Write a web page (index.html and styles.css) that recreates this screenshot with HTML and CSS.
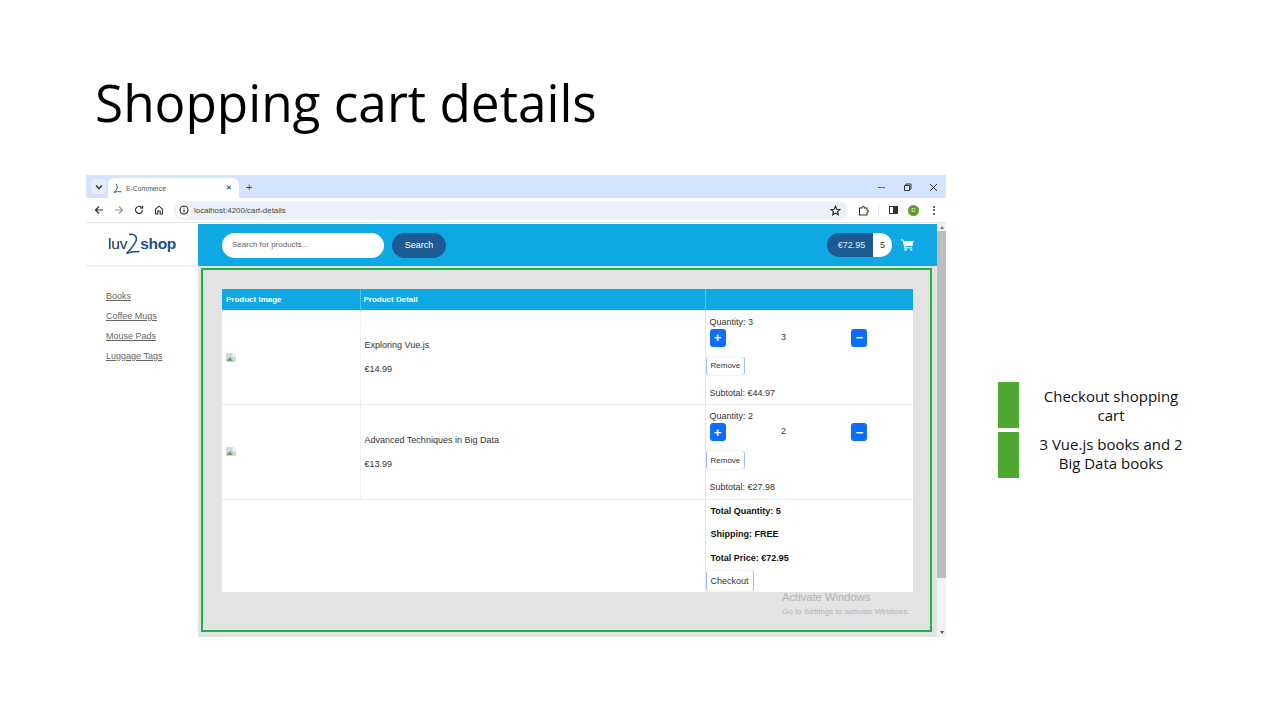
FILE: index.html
```html
<!DOCTYPE html>
<html lang="en">
<head>
    <meta charset="UTF-8">
    <title>Shopping cart details</title>
    <link rel="stylesheet" href="styles.css">
</head>
<body>
    <div class="slide">
        <h1 class="slide-title">Shopping cart details</h1>
        <div class="slide-body">
            <div class="browser">
                <div class="tabstrip">
                    <span class="tab-menu">
                        <svg width="8" height="8" viewBox="0 0 8 8"><path d="M1 2.5 4 5.5 7 2.5" fill="none" stroke="#333" stroke-width="1.4"/></svg>
                    </span>
                    <div class="tab">
                        <svg width="9" height="11" viewBox="0 0 9 11"><path d="M3 .8C4.5 2.5 4.5 5 3.5 6.5L1 9.5C3 8.5 6 8.5 8.5 8.8" fill="none" stroke="#1a5a96" stroke-width="1"/></svg>
                        <span class="tab-title">E-Commerce</span>
                        <span class="tab-close">✕</span>
                    </div>
                    <span class="tab-new">+</span>
                    <div class="window-controls">
                        <svg width="9" height="9" viewBox="0 0 9 9"><path d="M1 4.5H8" stroke="#666" stroke-width="1"/></svg>
                        <svg width="9" height="9" viewBox="0 0 9 9"><path d="M1.5 2.5H6.5V7.5H1.5ZM3 2.5V1H8V6H6.5" fill="none" stroke="#333" stroke-width="1"/></svg>
                        <svg width="9" height="9" viewBox="0 0 9 9"><path d="M1 1 8 8M8 1 1 8" stroke="#333" stroke-width="1"/></svg>
                    </div>
                </div>
                <div class="toolbar">
                    <svg class="nav-icon" width="10" height="10" viewBox="0 0 10 10"><path d="M9 5H1.5M5 1.5 1.5 5 5 8.5" fill="none" stroke="#333" stroke-width="1.2"/></svg>
                    <svg class="nav-icon" width="10" height="10" viewBox="0 0 10 10"><path d="M1 5H8.5M5 1.5 8.5 5 5 8.5" fill="none" stroke="#999" stroke-width="1.2"/></svg>
                    <svg class="nav-icon" width="10" height="10" viewBox="0 0 10 10"><path d="M8.5 5A3.5 3.5 0 1 1 7.4 2.4M8.6 0.8V3.2H6.2" fill="none" stroke="#333" stroke-width="1.2"/></svg>
                    <svg class="nav-icon" width="10" height="10" viewBox="0 0 10 10"><path d="M1.5 9V4.2L5 1.2 8.5 4.2V9H6.2V6H3.8V9Z" fill="none" stroke="#333" stroke-width="1.1"/></svg>
                    <div class="omnibox">
                        <span class="site-info">
                            <svg width="10" height="10" viewBox="0 0 10 10"><circle cx="5" cy="5" r="4" fill="none" stroke="#222" stroke-width="1.1"/><path d="M5 4.4V7.4M5 2.6V3.6" stroke="#222" stroke-width="1.1"/></svg>
                        </span>
                        <span class="url">localhost:4200/cart-details</span>
                        <svg class="star" width="11" height="11" viewBox="0 0 11 11"><path d="M5.5 1.2 6.8 4.2 10 4.5 7.6 6.6 8.3 9.8 5.5 8.1 2.7 9.8 3.4 6.6 1 4.5 4.2 4.2Z" fill="none" stroke="#222" stroke-width="1.1"/></svg>
                    </div>
                    <svg class="ext" width="11" height="11" viewBox="0 0 11 11"><path d="M1.5 3H4C4 1 6.5 1 6.5 3H9V5C10.8 5 10.8 7.5 9 7.5V10H1.5Z" fill="none" stroke="#333" stroke-width="1.1"/></svg>
                    <span class="divider"></span>
                    <span class="sidepanel"><span></span></span>
                    <span class="avatar">D</span>
                    <span class="kebab"><i></i><i></i><i></i></span>
                </div>
                <div class="page">
                    <div class="page-main">
                        <aside class="sidebar">
                            <div class="logo">
                                <span class="logo-luv">luv</span>
                                <svg class="logo-two" width="16" height="25" viewBox="0 0 16 25"><path d="M4 1.5C10 .5 13 4 10.5 9 8.5 13 5 17 1.5 20.5 6 18.5 10 18.5 14.5 18.5" fill="none" stroke="#1a4f8c" stroke-width="1.6"/></svg>
                                <span class="logo-shop">shop</span>
                            </div>
                            <nav class="menu">
                                <a href="#">Books</a>
                                <a href="#">Coffee Mugs</a>
                                <a href="#">Mouse Pads</a>
                                <a href="#">Luggage Tags</a>
                            </nav>
                        </aside>
                        <div class="content">
                            <header class="topbar">
                                <input class="search-input" placeholder="Search for products...">
                                <button class="search-btn">Search</button>
                                <div class="cart-status">
                                    <span class="cart-total">€72.95</span>
                                    <span class="cart-count">5</span>
                                </div>
                                <svg class="cart-icon" width="13" height="12" viewBox="0 0 13 12"><path d="M0 .5H2.3L2.8 2H12.6L11.4 7H4L4.3 8.2H11.2V9.2H3.4L1.6 1.5H0Z" fill="#fff"/><circle cx="4.6" cy="10.6" r="1.2" fill="#fff"/><circle cx="10.2" cy="10.6" r="1.2" fill="#fff"/></svg>
                            </header>
                            <main class="cart-area">
                                <table class="cart-table">
                                    <thead>
                                        <tr>
                                            <th class="col-image">Product Image</th>
                                            <th class="col-detail">Product Detail</th>
                                            <th class="col-actions"></th>
                                        </tr>
                                    </thead>
                                    <tbody>
                                        <tr class="item-row">
                                            <td><svg class="broken-img" width="10" height="9" viewBox="0 0 10 9"><path d="M0 0H7L10 3V9H0Z" fill="#cfd8e6"/><path d="M1 7 4 4 7 8H1Z" fill="#6aa84f"/><path d="M6 0 10 4 7 4Z" fill="#fff"/></svg></td>
                                            <td>
                                                <p class="item-name">Exploring Vue.js</p>
                                                <p class="item-price">€14.99</p>
                                            </td>
                                            <td class="actions">
                                                <div class="qty-label">Quantity: 3</div>
                                                <div class="qty-row">
                                                    <button class="qty-btn">+</button>
                                                    <span class="qty-value">3</span>
                                                    <button class="qty-btn">−</button>
                                                </div>
                                                <button class="outline-btn remove-btn">Remove</button>
                                                <div class="subtotal">Subtotal: €44.97</div>
                                            </td>
                                        </tr>
                                        <tr class="item-row">
                                            <td><svg class="broken-img" width="10" height="9" viewBox="0 0 10 9"><path d="M0 0H7L10 3V9H0Z" fill="#cfd8e6"/><path d="M1 7 4 4 7 8H1Z" fill="#6aa84f"/><path d="M6 0 10 4 7 4Z" fill="#fff"/></svg></td>
                                            <td>
                                                <p class="item-name">Advanced Techniques in Big Data</p>
                                                <p class="item-price">€13.99</p>
                                            </td>
                                            <td class="actions">
                                                <div class="qty-label">Quantity: 2</div>
                                                <div class="qty-row">
                                                    <button class="qty-btn">+</button>
                                                    <span class="qty-value">2</span>
                                                    <button class="qty-btn">−</button>
                                                </div>
                                                <button class="outline-btn remove-btn">Remove</button>
                                                <div class="subtotal">Subtotal: €27.98</div>
                                            </td>
                                        </tr>
                                        <tr class="total-row">
                                            <td colspan="2"></td>
                                            <td class="totals">
                                                <p>Total Quantity: 5</p>
                                                <p>Shipping: FREE</p>
                                                <p>Total Price: €72.95</p>
                                                <button class="outline-btn checkout-btn">Checkout</button>
                                            </td>
                                        </tr>
                                    </tbody>
                                </table>
                                <div class="highlight"></div>
                                <div class="watermark">
                                    <div class="wm-title">Activate Windows</div>
                                    <div class="wm-sub">Go to Settings to activate Windows.</div>
                                </div>
                            </main>
                        </div>
                    </div>
                    <div class="scrollbar">
                        <span class="arrow-up"></span>
                        <span class="thumb"></span>
                        <span class="arrow-down"></span>
                    </div>
                </div>
            </div>
            <ul class="notes">
                <li><span class="note-mark"></span><span class="note-text">Checkout shopping cart</span></li>
                <li><span class="note-mark"></span><span class="note-text">3 Vue.js books and 2 Big Data books</span></li>
            </ul>
        </div>
    </div>
</body>
</html>
```

FILE: styles.css
```css
* {
    box-sizing: border-box;
}
html, body {
    margin: 0;
    height: 100%;
    background: #fff;
    overflow: hidden;
}
body {
    font-family: "Liberation Sans", Arial, sans-serif;
    color: #212529;
}
.slide {
    width: 1287px;
    height: 712px;
    padding: 70px 0 0 86px;
}
.slide-title {
    margin: 0 0 41px 9px;
    height: 64px;
    font-family: "Open Sans", sans-serif;
    font-weight: 400;
    font-size: 51.3px;
    line-height: 64px;
    color: #000;
}
.slide-body {
    display: flex;
    align-items: flex-start;
}

/* browser chrome */
.browser {
    width: 860px;
    height: 462px;
    display: flex;
    flex-direction: column;
    flex-shrink: 0;
}
.tabstrip {
    height: 23px;
    background: #d3e3fd;
    display: flex;
    align-items: flex-end;
    padding-left: 5px;
}
.tab-menu {
    width: 15px;
    height: 15px;
    margin-bottom: 4px;
    background: #e6eefc;
    border-radius: 4px;
    display: flex;
    align-items: center;
    justify-content: center;
}
.tab {
    width: 131px;
    height: 20px;
    margin-left: 2px;
    background: #fff;
    border-radius: 6px 6px 0 0;
    display: flex;
    align-items: center;
    padding: 0 7px 0 5px;
    gap: 4px;
}
.tab-title {
    font-size: 6.8px;
    color: #555;
    flex: 1;
}
.tab-close {
    font-size: 7px;
    color: #222;
}
.tab-new {
    font-size: 11px;
    color: #444;
    margin: 0 0 4px 7px;
    line-height: 14px;
}
.window-controls {
    margin-left: auto;
    margin-right: 8px;
    margin-bottom: 6px;
    display: flex;
    gap: 17px;
}
.toolbar {
    height: 25px;
    background: #fff;
    border-bottom: 1px solid #e8e8e8;
    display: flex;
    align-items: center;
    padding-left: 8px;
}
.nav-icon {
    margin-right: 10px;
    flex-shrink: 0;
}
.omnibox {
    width: 674px;
    height: 19px;
    border-radius: 10px;
    background: #ecf0f9;
    display: flex;
    align-items: center;
    padding: 0 7px 0 2px;
}
.site-info {
    width: 15px;
    height: 15px;
    border-radius: 50%;
    background: #fff;
    display: flex;
    align-items: center;
    justify-content: center;
    margin-right: 3px;
}
.url {
    font-size: 7.9px;
    color: #444;
    flex: 1;
}
.ext {
    margin-left: 10px;
}
.divider {
    width: 1px;
    height: 10px;
    background: #d3e3fd;
    margin: 0 9px;
}
.sidepanel {
    width: 9px;
    height: 8px;
    border: 1px solid #333;
    margin: 0 10px 0 1px;
    display: flex;
    justify-content: flex-end;
}
.sidepanel span {
    width: 4px;
    background: #333;
}
.avatar {
    width: 11px;
    height: 11px;
    border-radius: 50%;
    background: #5f9a2c;
    color: #dfe;
    font-size: 6px;
    line-height: 11px;
    text-align: center;
    margin-right: 14px;
}
.kebab {
    display: flex;
    flex-direction: column;
    gap: 1.5px;
}
.kebab i {
    display: block;
    width: 2px;
    height: 2px;
    border-radius: 50%;
    background: #333;
}

/* page */
.page {
    flex: 1;
    display: flex;
    min-height: 0;
}
.page-main {
    flex: 1;
    display: flex;
    min-width: 0;
}
.sidebar {
    width: 112px;
    flex-shrink: 0;
    background: #fff;
}
.logo {
    height: 44px;
    border-bottom: 2px solid #f0f0f0;
    display: flex;
    align-items: center;
    justify-content: center;
    padding: 0 0 1px 0;
}
.logo-luv {
    font-size: 15.5px;
    color: #1c2b3a;
    letter-spacing: -0.2px;
}
.logo-two {
    margin: 3px -1px 0 -2px;
}
.logo-shop {
    font-size: 15.5px;
    font-weight: 700;
    color: #1a4f8c;
    letter-spacing: -0.3px;
}
.menu {
    display: flex;
    flex-direction: column;
    gap: 8px;
    padding: 23px 0 0 20px;
}
.menu a {
    font-size: 9px;
    line-height: 12px;
    color: #666;
    text-decoration: underline;
}
.content {
    flex: 1;
    display: flex;
    flex-direction: column;
    min-width: 0;
}
.topbar {
    height: 43px;
    background: #0ea8e4;
    border-top: 1px solid #fff;
    display: flex;
    align-items: center;
    padding: 0 23px 0 24px;
}
.search-input {
    width: 162px;
    height: 25px;
    border: none;
    border-radius: 13px;
    padding: 0 10px 2px;
    font-family: inherit;
    font-size: 8px;
    background: #fff;
    outline: none;
}
.search-input::placeholder {
    color: #666;
}
.search-btn {
    width: 54px;
    height: 25px;
    margin-left: 8px;
    border: none;
    border-radius: 13px;
    background: #1c5b92;
    color: #fff;
    font-family: inherit;
    font-size: 9px;
}
.cart-status {
    margin-left: auto;
    display: flex;
    height: 24px;
    font-size: 9px;
    line-height: 24px;
}
.cart-total {
    width: 46px;
    background: #1c5b92;
    color: #dceaf5;
    border-radius: 12px 0 0 12px;
    text-align: center;
    padding-left: 3px;
}
.cart-count {
    width: 19px;
    background: #fff;
    color: #333;
    border-radius: 0 12px 12px 0;
    text-align: center;
}
.cart-icon {
    margin-left: 9px;
}

/* cart table */
.cart-area {
    position: relative;
    flex: 1;
    background: #e3e3e3;
    padding: 23px 24px 0;
}
.cart-table {
    width: 691px;
    table-layout: fixed;
    border-collapse: collapse;
    background: #fff;
    font-size: 9px;
}
.cart-table th {
    height: 21px;
    background: #0ea8e4;
    color: #fff;
    font-size: 8px;
    text-align: left;
    padding: 0 4px;
    border-left: 1px solid #55c3ee;
}
.cart-table th:first-child {
    border-left: none;
}
.cart-table th.col-detail {
    padding-left: 3px;
}
.col-image {
    width: 138px;
}
.col-detail {
    width: 345px;
}
.cart-table td {
    padding: 0 0 0 4px;
    border-left: 1px solid #f0f0f0;
    border-top: 1px solid #eee;
    vertical-align: middle;
}
.cart-table td:first-child {
    border-left: none;
}
.item-row {
    height: 94.5px;
}
.item-row p {
    margin: 0;
    color: #333;
    line-height: 12px;
}
.item-name {
    padding-bottom: 12px;
}
.broken-img {
    display: block;
}
.cart-table td.actions {
    vertical-align: top;
    padding: 5px 0 0 0;
    border-left: 1px solid #d8e8f8;
    color: #333;
}
.qty-label,
.subtotal {
    padding-left: 4px;
    line-height: 12px;
}
.qty-row {
    display: flex;
    align-items: center;
    justify-content: space-between;
    width: 158px;
    margin: 1px 0 0 4px;
    height: 18px;
}
.qty-value {
    margin: -2px 10px 0 0;
}
.qty-btn {
    width: 16px;
    height: 18px;
    border: none;
    border-radius: 3px;
    padding: 0;
    background: #0d6efd;
    color: #fff;
    font-family: inherit;
    font-size: 13px;
    font-weight: 700;
    line-height: 17px;
}
.outline-btn {
    display: block;
    background: #fff;
    border: 1px solid #eef4fe;
    border-left-color: #9cc4fb;
    border-right-color: #9cc4fb;
    border-radius: 4px;
    padding: 0 4px;
    font-family: inherit;
    font-size: 8.5px;
    color: #333;
}
.remove-btn {
    width: 39px;
    height: 20px;
    margin: 9px 0 11px 0;
    font-size: 8px;
}
.checkout-btn {
    width: 48px;
    height: 22px;
    margin: 0;
    font-size: 9px;
}
.cart-table td.totals {
    padding: 0;
    vertical-align: top;
    border-left: 1px solid #d8e8f8;
}
.totals p {
    margin: 0;
    padding: 5px 0 0 5px;
    height: 23.5px;
    line-height: 12px;
    font-weight: 700;
    color: #111;
}
.highlight {
    position: absolute;
    left: 3px;
    top: 2px;
    width: 731px;
    height: 364px;
    border: 2px solid #21b04b;
}
.watermark {
    position: absolute;
    left: 584px;
    top: 324px;
    color: #b5b5b5;
}
.wm-title {
    font-size: 11.2px;
    line-height: 14px;
}
.wm-sub {
    font-size: 8.1px;
    line-height: 12px;
    margin-top: 2px;
}
.scrollbar {
    width: 9px;
    flex-shrink: 0;
    background: #f1f1f1;
    display: flex;
    flex-direction: column;
    align-items: center;
}
.arrow-up {
    margin: 3px 0 2px;
    border-left: 2px solid transparent;
    border-right: 2px solid transparent;
    border-bottom: 3px solid #777;
}
.thumb {
    width: 9px;
    height: 347px;
    background: #bdbdbd;
}
.arrow-down {
    margin-top: auto;
    margin-bottom: 3px;
    border-left: 2px solid transparent;
    border-right: 2px solid transparent;
    border-top: 3px solid #555;
}

/* right hand notes */
.notes {
    list-style: none;
    margin: 207px 0 0 52px;
    padding: 0;
    display: flex;
    flex-direction: column;
    gap: 4px;
}
.notes li {
    display: flex;
    align-items: center;
    height: 46px;
}
.note-mark {
    width: 21px;
    height: 46px;
    background: #4ea72e;
    flex-shrink: 0;
}
.note-text {
    width: 148px;
    margin: 2px 0 0 18px;
    text-align: center;
    font-family: "Open Sans", sans-serif;
    font-size: 15px;
    line-height: 19px;
    color: #111;
}
.notes li:last-child .note-text {
    margin-top: -2px;
}
```
